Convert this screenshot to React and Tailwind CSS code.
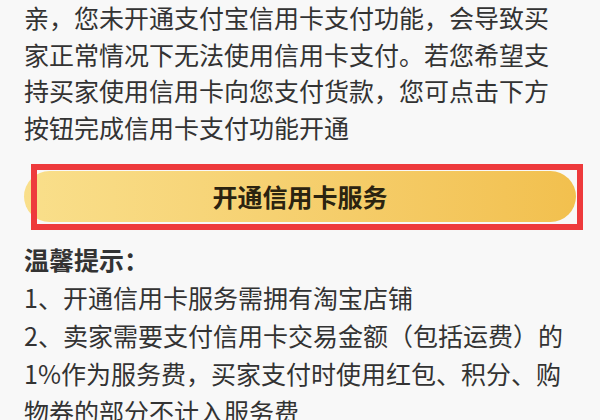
export default function App() {
  const font = { fontFamily: '"Noto Sans CJK SC", "Noto Sans", sans-serif' };
  const top = [
    "亲，您未开通支付宝信用卡支付功能，会导致买",
    "家正常情况下无法使用信用卡支付。若您希望支",
    "持买家使用信用卡向您支付货款，您可点击下方",
    "按钮完成信用卡支付功能开通",
  ];
  const tips = [
    "1、开通信用卡服务需拥有淘宝店铺",
    "2、卖家需要支付信用卡交易金额（包括运费）的",
    "1%作为服务费，买家支付时使用红包、积分、购",
    "物券的部分不计入服务费",
  ];
  return (
    <div
      className="relative w-[600px] h-[420px] overflow-hidden bg-[#f8f8f8] text-[#333333]"
      style={font}
    >
      <div className="mt-[-1px] pl-[24px] text-[25px] leading-[36.7px]">
        {top.map((t) => (
          <div key={t} className="whitespace-nowrap">
            {t}
          </div>
        ))}
      </div>
      <div className="relative mt-[25px]">
        <div className="ml-[24px] w-[552px] h-[51px] rounded-full bg-gradient-to-r from-[#f9df8b] to-[#f2c04e] flex items-center justify-center">
          <span className="text-[25px] font-bold text-[#2b2310]">开通信用卡服务</span>
        </div>
        <div className="absolute left-[31px] top-[-7px] w-[552px] h-[66px] border-[6px] border-[#ee3a3c]" />
      </div>
      <div className="mt-[18px] pl-[24px] text-[25px] leading-[38px]">
        <div className="font-bold whitespace-nowrap">温馨提示：</div>
        {tips.map((t) => (
          <div key={t} className="whitespace-nowrap">
            {t}
          </div>
        ))}
      </div>
    </div>
  );
}
